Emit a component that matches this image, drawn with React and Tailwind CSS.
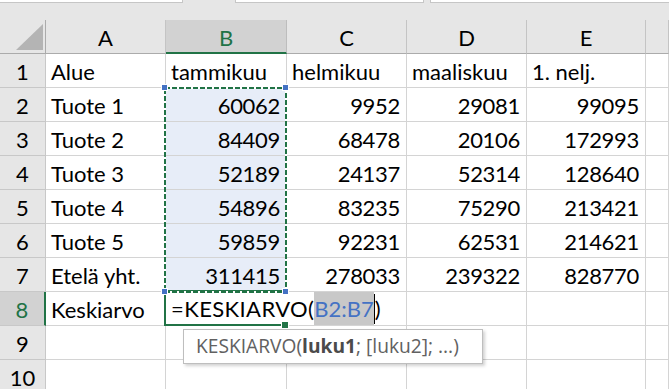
import React from "react";

const cols = ["A", "B", "C", "D", "E", ""];

const rows = [
  ["Alue", "tammikuu", "helmikuu", "maaliskuu", "1. nelj."],
  ["Tuote 1", 60062, 9952, 29081, 99095],
  ["Tuote 2", 84409, 68478, 20106, 172993],
  ["Tuote 3", 52189, 24137, 52314, 128640],
  ["Tuote 4", 54896, 83235, 75290, 213421],
  ["Tuote 5", 59859, 92231, 62531, 214621],
  ["Etelä yht.", 311415, 278033, 239322, 828770],
  ["Keskiarvo", "", "", "", ""],
  ["", "", "", "", ""],
  ["", "", "", "", ""],
];

const Handle = ({ className }) => (
  <div
    className={`absolute h-[7px] w-[7px] border border-white bg-[#4472c4] ${className}`}
  />
);

export default function App() {
  return (
    <div className="relative h-[389px] w-[669px] overflow-hidden bg-white font-['Lato',sans-serif] text-[22px] text-black">
      {/* formula bar remnants */}
      <div className="flex h-[20px] items-start bg-[#e6e6e6]">
        <div className="h-[3px] w-[183px] border-b border-r border-[#c6c6c6] bg-white" />
        <div className="h-[3px] w-[189px] ml-[52px] border-b border-l border-r border-[#c6c6c6] bg-white" />
        <div className="h-[3px] flex-1 ml-[6px] border-b border-l border-[#c6c6c6] bg-white" />
      </div>

      <div className="grid grid-cols-[46px_120px_121px_120px_120px_119px_1fr]">
        {/* corner */}
        <div className="relative h-[34px] border-b border-r border-[#ababab] bg-[#e6e6e6]">
          <svg className="absolute left-[16px] top-[4px]" width="27" height="26" viewBox="0 0 27 26">
            <polygon points="0,26 27,0 27,26" fill="#b4b4b4" />
          </svg>
        </div>
        {cols.map((c, i) =>
          c === "B" ? (
            <div
              key={i}
              className="h-[34px] border-b-2 border-r border-b-[#217346] border-r-[#bdbdbd] bg-[#d2d2d2] pt-[2px] text-center leading-[31px] text-[#217346]"
            >
              {c}
            </div>
          ) : (
            <div
              key={i}
              className="h-[34px] border-b border-r border-b-[#ababab] border-r-[#c4c4c4] bg-[#e6e6e6] pt-[2px] text-center leading-[31px]"
            >
              {c}
            </div>
          ),
        )}

        {rows.map((r, ri) => (
          <React.Fragment key={ri}>
            <div
              className={`h-[34px] border-b pt-[2px] text-center leading-[32px] ${
                ri === 7
                  ? "border-r-2 border-r-[#217346] border-b-[#c8c8c8] bg-[#d2d2d2] text-[#217346]"
                  : "border-r border-[#c8c8c8] bg-[#e6e6e6]"
              }`}
            >
              {ri + 1}
            </div>
            {[0, 1, 2, 3, 4, 5].map((ci) => {
              const v = r[ci] ?? "";
              const num = typeof v === "number";
              const sel = ci === 1 && ri >= 1 && ri <= 6;
              return (
                <div
                  key={ci}
                  className={`h-[34px] whitespace-nowrap border-b border-r border-[#d4d4d4] pt-[2px] leading-[32px] ${
                    num ? "pr-[6px] text-right tracking-[-0.3px]" : "pl-[5px]"
                  } ${sel ? "bg-[#e7edf8]" : ""}`}
                >
                  {v}
                </div>
              );
            })}
          </React.Fragment>
        ))}
      </div>

      {/* active cell B8 */}
      <div className="absolute left-[164px] top-[290px] h-[36px] w-[124px] border-2 border-[#217346]" />

      {/* in-cell editor */}
      <div className="absolute left-[166px] top-[293px] flex h-[31px] w-[220px] items-center bg-white pl-[5px] whitespace-nowrap">
        <span className="tracking-[0.4px]">=KESKIARVO(</span>
        <span className="bg-[#c8c8c8] text-[#4472c4]">B2:B7</span>
        <span className="h-[30px] w-px bg-black" />
        <span>)</span>
      </div>

      {/* copy marquee around B2:B7 */}
      <svg className="absolute left-[164px] top-[86px]" width="124" height="208">
        <rect x="1" y="2" width="121" height="204" fill="none" stroke="#ffffff" strokeWidth="2" />
        <rect x="1" y="2" width="121" height="204" fill="none" stroke="#217346" strokeWidth="2" strokeDasharray="5 2" />
      </svg>
      <Handle className="left-[161px] top-[84px]" />
      <Handle className="left-[282px] top-[84px]" />
      <Handle className="left-[161px] top-[288px]" />
      <Handle className="left-[282px] top-[288px]" />

      {/* fill handle */}
      <div className="absolute left-[281px] top-[321px] h-[8px] w-[8px] border border-white bg-[#217346]" />

      {/* function tooltip */}
      <div className="absolute left-[183px] top-[329px] flex h-[35px] w-[300px] items-center whitespace-nowrap border border-[#bebebe] bg-white pl-[12px] font-['Open_Sans',sans-serif] text-[19.2px] text-[#616161] shadow-[2px_2px_3px_rgba(0,0,0,0.18)]">
        KESKIARVO(<b className="font-bold text-[#4b4b4b]">luku1</b>; [luku2]; ...)
      </div>
    </div>
  );
}
